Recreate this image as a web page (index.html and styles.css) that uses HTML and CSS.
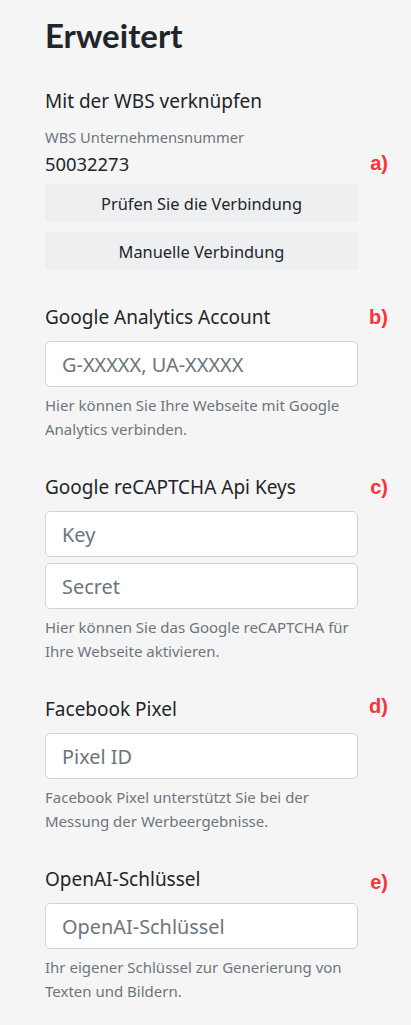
FILE: index.html
```html
<!DOCTYPE html>
<html lang="de">

<head>
    <meta charset="UTF-8">
    <meta name="viewport" content="width=device-width, initial-scale=1.0">
    <title>Erweitert</title>
    <link rel="stylesheet" href="styles.css">
</head>

<body>
    <div class="page">
        <h1 class="page-title">Erweitert</h1>

        <section class="group group-wbs">
            <h2 class="group-title">Mit der WBS verknüpfen</h2>
            <div class="field-label">WBS Unternehmensnummer</div>
            <div class="field-value">50032273</div>
            <span class="mark mark-a">a)</span>
            <button class="btn">Prüfen Sie die Verbindung</button>
            <button class="btn">Manuelle Verbindung</button>
        </section>

        <section class="group">
            <h2 class="group-title">Google Analytics Account</h2>
            <span class="mark">b)</span>
            <input class="input" type="text" placeholder="G-XXXXX, UA-XXXXX">
            <p class="help">Hier können Sie Ihre Webseite mit Google Analytics verbinden.</p>
        </section>

        <section class="group">
            <h2 class="group-title">Google reCAPTCHA Api Keys</h2>
            <span class="mark">c)</span>
            <input class="input" type="text" placeholder="Key">
            <input class="input" type="text" placeholder="Secret">
            <p class="help">Hier können Sie das Google reCAPTCHA für Ihre Webseite aktivieren.</p>
        </section>

        <section class="group">
            <h2 class="group-title">Facebook Pixel</h2>
            <span class="mark mark-d">d)</span>
            <input class="input" type="text" placeholder="Pixel ID">
            <p class="help">Facebook Pixel unterstützt Sie bei der Messung der Werbeergebnisse.</p>
        </section>

        <section class="group">
            <h2 class="group-title">OpenAI-Schlüssel</h2>
            <span class="mark mark-e">e)</span>
            <input class="input" type="text" placeholder="OpenAI-Schlüssel">
            <p class="help">Ihr eigener Schlüssel zur Generierung von Texten und Bildern.</p>
        </section>
    </div>
</body>

</html>
```

FILE: styles.css
```css
body {
    margin: 0;
    background-color: #f5f5f5;
    font-family: "Noto Sans", "Open Sans", sans-serif;
    color: #212529;
}

.page {
    padding: 15px 53px 30px 45px;
}

.page-title {
    margin: 0 0 32px;
    font-family: Lato, "Noto Sans", sans-serif;
    font-size: 33px;
    line-height: 40px;
    font-weight: 700;
}

.group {
    position: relative;
    display: flex;
    flex-direction: column;
    margin-bottom: 32px;
}

.group-wbs {
    margin-bottom: 33px;
}

.group-title {
    margin: 0 0 10px;
    font-size: 19px;
    line-height: 28px;
    font-weight: 400;
}

.field-label {
    font-size: 14.7px;
    line-height: 24px;
    color: #6c757d;
}

.field-value {
    font-size: 18.4px;
    line-height: 30px;
    margin-bottom: 5px;
}

.mark {
    position: absolute;
    top: 0;
    right: -30px;
    font-family: "Liberation Sans", Arial, sans-serif;
    font-weight: 700;
    font-size: 20px;
    line-height: 28px;
    color: #f7333a;
}

.mark-a {
    top: 62px;
}

.mark-d {
    top: -3px;
}

.mark-e {
    top: 3px;
}

.btn {
    height: 38px;
    margin-bottom: 10px;
    border: none;
    border-radius: 4px;
    background-color: #eeeff1;
    font-family: inherit;
    font-size: 16.4px;
    color: #212529;
}

.btn:last-child {
    margin-bottom: 0;
}

.input {
    box-sizing: border-box;
    height: 46px;
    padding: 0 16px;
    border: 1px solid #ced4da;
    border-radius: 5px;
    background-color: #fff;
    font-family: inherit;
    font-size: 19.9px;
    color: #212529;
}

.input + .input {
    margin-top: 6px;
}

.input::placeholder {
    color: #6c757d;
}

.help {
    margin: 6px 0 0;
    font-size: 15px;
    line-height: 24px;
    color: #6c757d;
}
```
